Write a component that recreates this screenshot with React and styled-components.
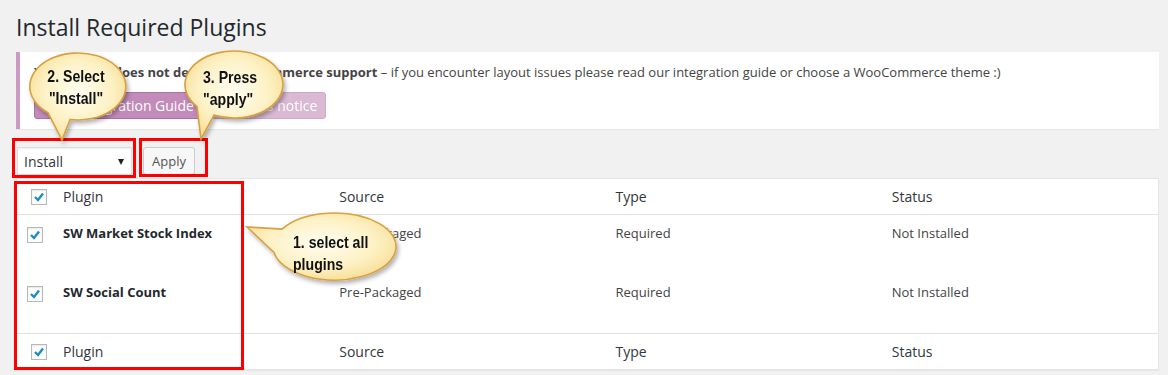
import React from "react";
import styled, { createGlobalStyle } from "styled-components";

const GlobalStyle = createGlobalStyle`
    html, body {
        margin: 0;
        padding: 0;
        background: #f1f1f1;
    }
    body {
        font-family: "Open Sans", "Liberation Sans", sans-serif;
        font-size: 13px;
        color: #444;
    }
`;

const Page = styled.div`
    position: relative;
    width: 1168px;
    height: 375px;
    overflow: hidden;
    box-sizing: border-box;
    padding: 4px 9px 0 16px;
`;

const Title = styled.h1`
    margin: 0;
    padding: 9px 0 4px;
    font-size: 23px;
    font-weight: 400;
    line-height: 29px;
    color: #23282d;
`;

const Notice = styled.div`
    margin-top: 6px;
    background: #fff;
    border-left: 4px solid #cc99c2;
    box-shadow: 0 1px 1px rgba(0, 0, 0, 0.04);
    padding: 10px 12px 10px 14px;
`;

const NoticeText = styled.p`
    margin: 0;
    line-height: 20px;
    color: #444;
`;

const Strong = styled.strong`
    font-weight: 700;
`;

const ButtonRow = styled.div`
    display: flex;
    gap: 4px;
    margin-top: 10px;
`;

const NoticeButton = styled.a`
    display: inline-flex;
    align-items: center;
    height: 27px;
    box-sizing: border-box;
    padding: 0 8px 1px;
    border-radius: 3px;
    background: #c28bb9;
    border: 1px solid #ad72a3;
    color: #fff;
    font-size: 14px;
    text-decoration: none;
    opacity: ${props => (props.$faded ? 0.6 : 1)};
`;

const Toolbar = styled.div`
    display: flex;
    align-items: center;
    gap: 11px;
    margin-top: 18px;
    padding-left: 1px;
    height: 28px;
`;

const SelectBox = styled.div`
    width: 115px;
    height: 28px;
    box-sizing: border-box;
    border: 1px solid #ddd;
    background: #fff;
    box-shadow: inset 0 1px 2px rgba(0, 0, 0, 0.07);
    display: flex;
    align-items: center;
    justify-content: space-between;
    padding: 0 7px 0 6px;
    font-size: 14px;
    color: #32373c;
`;

const Arrow = styled.span`
    width: 0;
    height: 0;
    border-left: 3.5px solid transparent;
    border-right: 3.5px solid transparent;
    border-top: 6px solid #222;
    margin-top: 1px;
`;

const ApplyButton = styled.div`
    height: 28px;
    box-sizing: border-box;
    padding: 0 8px 1px;
    display: flex;
    align-items: center;
    border: 1px solid #ccc;
    border-radius: 3px;
    background: #f7f7f7;
    box-shadow: 0 1px 0 #ccc;
    color: #555;
    font-size: 13px;
`;

const Table = styled.div`
    margin-top: 3px;
    background: #fff;
    border: 1px solid #e5e5e5;
    box-shadow: 0 1px 1px rgba(0, 0, 0, 0.04);
`;

const HeadRow = styled.div`
    display: grid;
    grid-template-columns: 36px repeat(4, 1fr);
    align-items: center;
    height: 35px;
    border-bottom: ${props => (props.$foot ? "none" : "1px solid #e1e1e1")};
    border-top: ${props => (props.$foot ? "1px solid #e1e1e1" : "none")};
`;

const BodyRow = styled.div`
    display: grid;
    grid-template-columns: 36px repeat(4, 1fr);
    align-items: start;
    height: 59px;
    box-sizing: border-box;
    padding-top: 8px;
`;

const HeadCell = styled.div`
    padding: 0 10px;
    font-size: 14px;
    line-height: 20px;
    color: #32373c;
`;

const Cell = styled.div`
    padding: 0 10px;
    font-size: 13px;
    line-height: 20px;
    color: ${props => (props.$name ? "#23282d" : "#444")};
    font-weight: ${props => (props.$name ? 700 : 400)};
`;

const CheckCell = styled.div`
    padding-left: ${props => (props.$head ? 14 : 10)}px;
    padding-top: ${props => (props.$head ? 0 : 4)}px;
`;

const Box = styled.span`
    display: block;
    width: 16px;
    height: 16px;
    box-sizing: border-box;
    border: 1px solid #b4b9be;
    background: #fff;
    box-shadow: inset 0 1px 2px rgba(0, 0, 0, 0.1);
`;

const Overlay = styled.svg`
    position: absolute;
    top: 0;
    left: 0;
    pointer-events: none;
`;

const BubbleText = styled.div`
    position: absolute;
    left: ${props => props.$x}px;
    top: ${props => props.$y}px;
    width: ${props => props.$w}px;
    text-align: ${props => (props.$center ? "center" : "left")};
    transform: scaleX(0.83);
    transform-origin: ${props => (props.$center ? "center top" : "left top")};
    font-family: "Liberation Sans", Arial, sans-serif;
    font-weight: 700;
    font-size: 17px;
    line-height: 22px;
    color: #111;
    white-space: nowrap;
`;

const Checkbox = () => (
    <Box>
        <svg width="14" height="14" viewBox="0 0 14 14">
            <polyline points="3,7 6,10 11,3.5" fill="none" stroke="#1e8cbe" strokeWidth="2.4" />
        </svg>
    </Box>
);

const plugins = [
    { name: "SW Market Stock Index", source: "Pre-Packaged", type: "Required", status: "Not Installed" },
    { name: "SW Social Count", source: "Pre-Packaged", type: "Required", status: "Not Installed" }
];

const columns = ["Plugin", "Source", "Type", "Status"];

const bubbles = [
    "M70 119.5 L62 140 L48 112.7 A48 33.5 0 1 1 70 119.5 Z",
    "M214 115.1 L201 139 L197 106.5 A49 33.5 0 1 1 214 115.1 Z",
    "M282 229.1 L247 227 L274 252.5 A61.5 33.5 0 1 0 282 229.1 Z"
];

const App = () => (
    <>
        <GlobalStyle />
        <Page>
            <Title>Install Required Plugins</Title>
            <Notice>
                <NoticeText>
                    <Strong>Your theme does not declare WooCommerce support</Strong> – if you
                    encounter layout issues please read our integration guide or choose a
                    WooCommerce theme :)
                </NoticeText>
                <ButtonRow>
                    <NoticeButton>Read Integration Guide</NoticeButton>
                    <NoticeButton $faded>Hide this notice</NoticeButton>
                </ButtonRow>
            </Notice>
            <Toolbar>
                <SelectBox>
                    Install
                    <Arrow />
                </SelectBox>
                <ApplyButton>Apply</ApplyButton>
            </Toolbar>
            <Table>
                <HeadRow>
                    <CheckCell $head>
                        <Checkbox />
                    </CheckCell>
                    {columns.map(col => (
                        <HeadCell key={col}>{col}</HeadCell>
                    ))}
                </HeadRow>
                {plugins.map(plugin => (
                    <BodyRow key={plugin.name}>
                        <CheckCell>
                            <Checkbox />
                        </CheckCell>
                        <Cell $name>{plugin.name}</Cell>
                        <Cell>{plugin.source}</Cell>
                        <Cell>{plugin.type}</Cell>
                        <Cell>{plugin.status}</Cell>
                    </BodyRow>
                ))}
                <HeadRow $foot>
                    <CheckCell $head>
                        <Checkbox />
                    </CheckCell>
                    {columns.map(col => (
                        <HeadCell key={col}>{col}</HeadCell>
                    ))}
                </HeadRow>
            </Table>

            <Overlay width="1168" height="375" viewBox="0 0 1168 375">
                <defs>
                    <radialGradient id="bubbleFill" cx="50%" cy="45%" r="60%">
                        <stop offset="0%" stopColor="#fffdf0" />
                        <stop offset="60%" stopColor="#fdf1c4" />
                        <stop offset="100%" stopColor="#f6dc92" />
                    </radialGradient>
                    <filter id="bubbleShadow" x="-20%" y="-20%" width="150%" height="150%">
                        <feDropShadow dx="2" dy="3" stdDeviation="2" floodColor="#000" floodOpacity="0.3" />
                    </filter>
                </defs>
                <g fill="none" stroke="#f00" strokeWidth="3">
                    <rect x="13.5" y="139.5" width="121" height="37" />
                    <rect x="140.5" y="139.5" width="66" height="36" />
                    <rect x="15.5" y="182.5" width="227" height="186" />
                </g>
                {bubbles.map(d => (
                    <path
                        key={d}
                        d={d}
                        fill="url(#bubbleFill)"
                        stroke="#d9a03f"
                        strokeWidth="1.6"
                        filter="url(#bubbleShadow)"
                    />
                ))}
            </Overlay>

            <BubbleText $x={36} $y={66} $w={80} $center>
                2. Select
                <br />
                "Install"
            </BubbleText>
            <BubbleText $x={203} $y={67} $w={70}>
                3. Press
                <br />
                "apply"
            </BubbleText>
            <BubbleText $x={293} $y={232} $w={90}>
                1. select all
                <br />
                plugins
            </BubbleText>
        </Page>
    </>
);

export default App;
